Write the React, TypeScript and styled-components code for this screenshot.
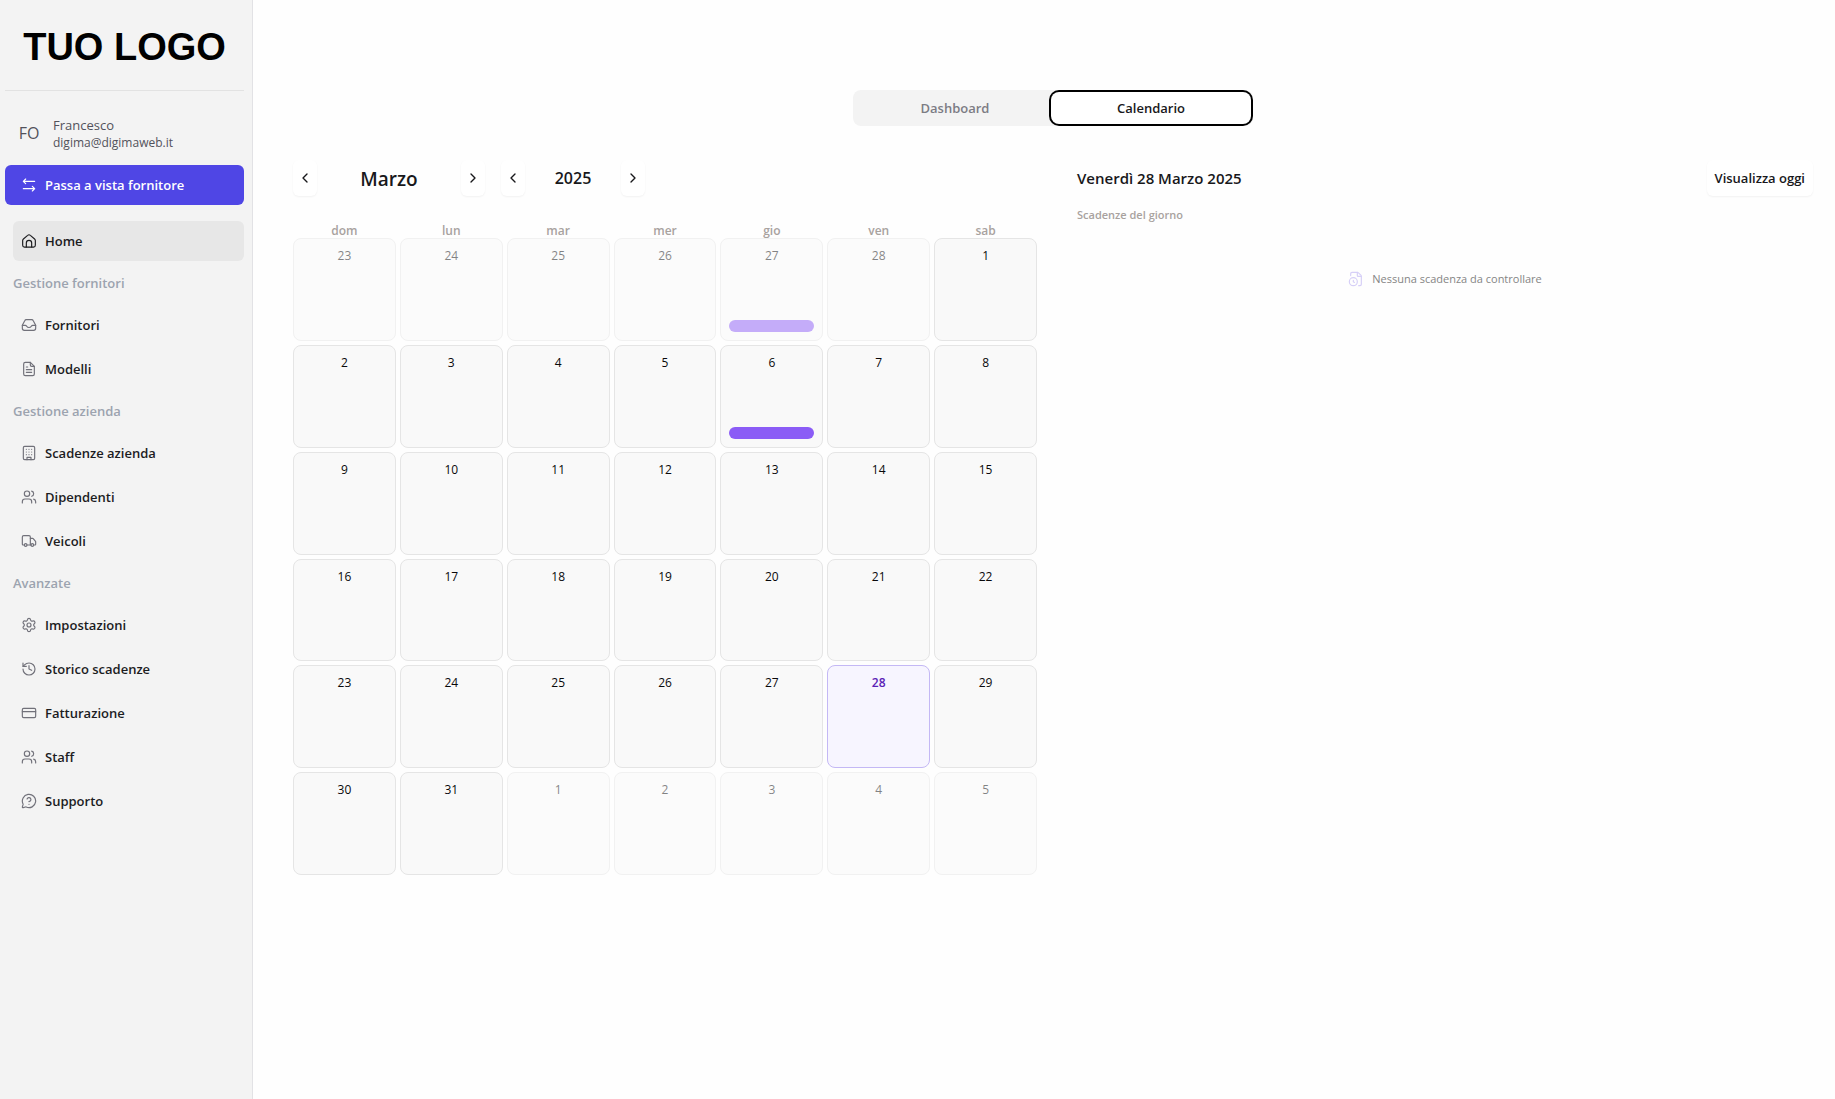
import React from "react";
import styled, { createGlobalStyle, css } from "styled-components";
import {
  Users, Truck, Settings, History, CreditCard, MessageCircleQuestionMark,
  ChevronLeft, ChevronRight, FileClock,
} from "lucide-react";

const GlobalStyle = createGlobalStyle`
  *, *::before, *::after { box-sizing: border-box; }
  body {
    margin: 0;
    background: #fefefe;
    color: #18181b;
    font-family: "Open Sans", "Noto Sans", sans-serif;
    font-size: 13px;
    line-height: 20px;
  }
  button { font: inherit; color: inherit; cursor: pointer; }
  h1, h2, h3, p { margin: 0; font: inherit; }
`;

const Layout = styled.div`
  display: grid;
  grid-template-columns: 253px minmax(0, 1fr);
  min-height: 100vh;
`;

const Sidebar = styled.aside`
  display: flex;
  flex-direction: column;
  padding: 0 8px 0 5px;
  background: #f3f3f3;
  border-right: 1px solid #e2e2e5;
`;

const Logo = styled.div`
  height: 91px;
  display: flex;
  align-items: center;
  justify-content: center;
  padding-top: 3px;
  border-bottom: 1px solid #e2e2e2;
  color: #000;
  font: bold 38px/44px "Liberation Sans", Arial, sans-serif;
`;

const Profile = styled.div`
  display: flex;
  align-items: center;
  gap: 12px;
  height: 74px;
  padding: 10px 12px 0;
  color: #52525b;
`;

const Initials = styled.span`
  width: 24px;
  text-align: center;
  font-size: 16px;
`;

const ProfileText = styled.div`
  display: flex;
  flex-direction: column;
`;

const Email = styled.span`
  font-size: 12px;
  line-height: 16px;
`;

const SwitchButton = styled.button`
  display: flex;
  align-items: center;
  gap: 8px;
  height: 40px;
  padding: 0 16px;
  border: 0;
  border-radius: 6px;
  background: #4f46e5;
  color: #fff;
  font-weight: 600;
`;

const Nav = styled.nav`
  display: flex;
  flex-direction: column;
  gap: 4px;
  padding: 16px 0 0 8px;
`;

const NavLabel = styled.h2`
  font-weight: 600;
  line-height: 36px;
  color: #9ca3af;
`;

const NavLink = styled.a<{ $active?: boolean }>`
  display: flex;
  align-items: center;
  gap: 8px;
  height: 40px;
  padding: 0 8px;
  border-radius: 6px;
  color: #1c1c1f;
  font-weight: 600;
  text-decoration: none;
  background: ${(p) => (p.$active ? "#e7e7e7" : "transparent")};
  svg { color: ${(p) => (p.$active ? "#1c1c1f" : "#71717a")}; }
`;

const Main = styled.main`
  display: flex;
  flex-direction: column;
  gap: 34px;
  padding: 90px 22px 40px 40px;
`;

const Tabs = styled.div`
  display: flex;
  align-self: center;
  width: 400px;
  max-width: 100%;
  padding: 4px;
  border-radius: 8px;
  background: #f3f3f3;
`;

const Tab = styled.button<{ $active?: boolean }>`
  flex: 1;
  height: 28px;
  padding: 0 12px;
  border: 0;
  border-radius: 6px;
  background: transparent;
  color: #7c7c84;
  font-weight: 600;
  ${(p) => p.$active && css`
    background: #fff;
    color: #18181b;
    box-shadow: 0 0 0 2px #fff, 0 0 0 4px #000;
  `}
`;

const Columns = styled.div`
  display: grid;
  grid-template-columns: minmax(0, 744fr) minmax(0, 736fr);
  gap: 40px;
`;

const Panel = styled.section`
  display: flex;
  flex-direction: column;
`;

const Picker = styled.div`
  display: flex;
  gap: 16px;
  margin-bottom: 28px;
`;

const Stepper = styled.div`
  display: flex;
  align-items: center;
`;

const PlainButton = styled.button`
  display: flex;
  align-items: center;
  justify-content: center;
  height: 36px;
  padding: 0 8px;
  border: 0;
  border-radius: 6px;
  background: #fff;
  font-weight: 600;
  box-shadow: 0 1px 2px rgba(0, 0, 0, 0.05);
`;

const StepButton = styled(PlainButton)`
  padding: 0 4px;
`;

const Month = styled.h1`
  width: 144px;
  padding-top: 2px;
  text-align: center;
  font-size: 19px;
  line-height: 28px;
  font-weight: 600;
`;

const Year = styled.span`
  width: 96px;
  text-align: center;
  font-size: 16px;
  font-weight: 600;
`;

const Calendar = styled.div`
  display: grid;
  grid-template-columns: repeat(7, minmax(0, 1fr));
  gap: 4px;
`;

const Weekday = styled.span`
  text-align: center;
  font-size: 12px;
  line-height: 14px;
  font-weight: 600;
  color: #a8a29e;
`;

const Day = styled.button<{ $outside?: boolean; $today?: boolean }>`
  display: flex;
  flex-direction: column;
  align-items: stretch;
  justify-content: space-between;
  aspect-ratio: 1;
  padding: 8px;
  border: 1px solid ${(p) => (p.$today ? "#c4b8f5" : "#e5e5e5")};
  border-radius: 8px;
  background: ${(p) => (p.$today ? "#f7f5ff" : "#f9f9f9")};
  color: ${(p) => (p.$today ? "#5b21b6" : "#09090b")};
  font-size: 12px;
  line-height: 18px;
  font-weight: ${(p) => (p.$today ? 600 : 400)};
  opacity: ${(p) => (p.$outside ? 0.5 : 1)};
`;

const Marker = styled.span`
  height: 12px;
  border-radius: 6px;
  background: #8b5cf6;
`;

const DayHeader = styled.header`
  display: flex;
  align-items: center;
  justify-content: space-between;
`;

const DayTitle = styled.h2`
  font-size: 15px;
  line-height: 24px;
  font-weight: 600;
`;

const Caption = styled.h3`
  margin-top: 11px;
  font-size: 11px;
  line-height: 16px;
  font-weight: 600;
  color: #a8a29e;
`;

const Empty = styled.p`
  display: flex;
  align-items: center;
  justify-content: center;
  gap: 8px;
  margin-top: 48px;
  font-size: 11px;
  line-height: 16px;
  color: #858585;
  svg { color: #d6cff7; }
`;

const Glyph = styled.svg.attrs({
  viewBox: "0 0 24 24",
  width: 16,
  height: 16,
  fill: "none",
  stroke: "currentColor",
  strokeWidth: 1.75,
  strokeLinecap: "round",
  strokeLinejoin: "round",
  "aria-hidden": true,
})`
  flex: none;
`;

const SwapIcon = () => (
  <Glyph><path d="M7 3 3.5 6.5 7 10M3.5 6.5h17M17 14l3.5 3.5L17 21M20.5 17.5h-17" /></Glyph>
);

const HomeIcon = () => (
  <Glyph>
    <path d="M2.5 11.2a3 3 0 0 1 1.1-2.3l6.4-5.4a3 3 0 0 1 4 0l6.4 5.4a3 3 0 0 1 1.1 2.3v7.3a2.75 2.75 0 0 1-2.75 2.75H5.25A2.75 2.75 0 0 1 2.5 18.500z" />
    <path d="M8 21v-6a4 4 0 0 1 8 0v6" />
  </Glyph>
);

const InboxIcon = () => (
  <Glyph>
    <path d="M5.600 5.600C6 4.600 7 4 8 4h8c1 0 2 .6 2.400 1.600L22 12.500V17a3 3 0 0 1-3 3H5a3 3 0 0 1-3-3v-4.500z" />
    <path d="M2 12.500h4.500c1 0 1.500.5 2 1.300.8 1.300 1.800 2 3.500 2s2.700-.7 3.500-2c.5-.8 1-1.300 2-1.300H22" />
  </Glyph>
);

const DocumentIcon = () => (
  <Glyph>
    <path d="M14 2H6.500A2.500 2.500 0 0 0 4 4.500v15A2.500 2.500 0 0 0 6.500 22h11a2.500 2.500 0 0 0 2.500-2.500V8z" />
    <path d="M14 2v4a2 2 0 0 0 2 2h4M8 9h2M8 13h8M8 17h8" />
  </Glyph>
);

const BuildingIcon = () => (
  <Glyph>
    <rect x="3.500" y="2" width="17" height="20" rx="2" />
    <path d="M9 22v-3.500h6V22M8 6.500h0M12 6.500h0M16 6.500h0M8 10.500h0M12 10.500h0M16 10.500h0M8 14.500h0M12 14.500h0M16 14.500h0" />
  </Glyph>
);

const line = (Icon: React.ComponentType<{ size?: number; strokeWidth?: number }>) => () =>
  <Icon size={16} strokeWidth={1.75} />;

const UsersIcon = line(Users);
const TruckIcon = line(Truck);
const SettingsIcon = line(Settings);
const HistoryIcon = line(History);
const CardIcon = line(CreditCard);
const HelpIcon = line(MessageCircleQuestionMark);

const groups = [
  { title: "", items: [{ name: "Home", Icon: HomeIcon }] },
  { title: "Gestione fornitori", items: [{ name: "Fornitori", Icon: InboxIcon }, { name: "Modelli", Icon: DocumentIcon }] },
  {
    title: "Gestione azienda",
    items: [
      { name: "Scadenze azienda", Icon: BuildingIcon },
      { name: "Dipendenti", Icon: UsersIcon },
      { name: "Veicoli", Icon: TruckIcon },
    ],
  },
  {
    title: "Avanzate",
    items: [
      { name: "Impostazioni", Icon: SettingsIcon },
      { name: "Storico scadenze", Icon: HistoryIcon },
      { name: "Fatturazione", Icon: CardIcon },
      { name: "Staff", Icon: UsersIcon },
      { name: "Supporto", Icon: HelpIcon },
    ],
  },
];

const weekdays = ["dom", "lun", "mar", "mer", "gio", "ven", "sab"];
const firstDay = new Date(2025, 1, 23);
const days = Array.from({ length: 42 }, (_, i) => {
  const date = new Date(firstDay.getFullYear(), firstDay.getMonth(), firstDay.getDate() + i);
  const month = date.getMonth();
  const day = date.getDate();
  return {
    day,
    outside: month !== 2,
    today: month === 2 && day === 28,
    marked: (month === 1 && day === 27) || (month === 2 && day === 6),
  };
});

export default function App() {
  return (
    <>
      <GlobalStyle />
      <Layout>
        <Sidebar>
          <Logo>TUO LOGO</Logo>
          <Profile>
            <Initials>FO</Initials>
            <ProfileText>
              <span>Francesco</span>
              <Email>digima@digimaweb.it</Email>
            </ProfileText>
          </Profile>
          <SwitchButton type="button"><SwapIcon />Passa a vista fornitore</SwitchButton>
          <Nav>
            {groups.map((group) => (
              <React.Fragment key={group.title}>
                {group.title && <NavLabel>{group.title}</NavLabel>}
                {group.items.map(({ name, Icon }) => (
                  <NavLink key={name} href="#" $active={name === "Home"}><Icon />{name}</NavLink>
                ))}
              </React.Fragment>
            ))}
          </Nav>
        </Sidebar>
        <Main>
          <Tabs role="tablist">
            <Tab type="button" role="tab" aria-selected="false">Dashboard</Tab>
            <Tab type="button" role="tab" aria-selected="true" $active>Calendario</Tab>
          </Tabs>
          <Columns>
            <Panel>
              <Picker>
                <Stepper>
                  <StepButton type="button" aria-label="Mese precedente"><ChevronLeft size={16} /></StepButton>
                  <Month>Marzo</Month>
                  <StepButton type="button" aria-label="Mese successivo"><ChevronRight size={16} /></StepButton>
                </Stepper>
                <Stepper>
                  <StepButton type="button" aria-label="Anno precedente"><ChevronLeft size={16} /></StepButton>
                  <Year>2025</Year>
                  <StepButton type="button" aria-label="Anno successivo"><ChevronRight size={16} /></StepButton>
                </Stepper>
              </Picker>
              <Calendar as="header">
                {weekdays.map((name) => <Weekday key={name}>{name}</Weekday>)}
              </Calendar>
              <Calendar>
                {days.map(({ day, outside, today, marked }, i) => (
                  <Day key={i} type="button" $outside={outside} $today={today}>
                    <span>{day}</span>
                    {marked && <Marker />}
                  </Day>
                ))}
              </Calendar>
            </Panel>
            <Panel>
              <DayHeader>
                <DayTitle>Venerdì 28 Marzo 2025</DayTitle>
                <PlainButton type="button">Visualizza oggi</PlainButton>
              </DayHeader>
              <Caption>Scadenze del giorno</Caption>
              <Empty><FileClock size={16} strokeWidth={1.75} />Nessuna scadenza da controllare</Empty>
            </Panel>
          </Columns>
        </Main>
      </Layout>
    </>
  );
}
